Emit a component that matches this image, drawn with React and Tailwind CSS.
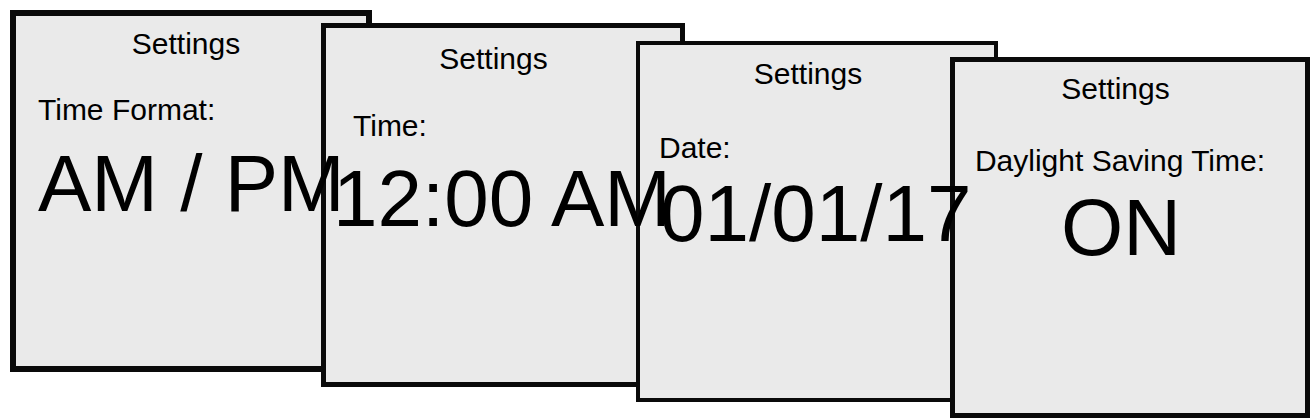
import React from "react";

const font = { fontFamily: '"Liberation Sans", Arial, sans-serif' };

export default function App() {
  return (
    <div
      className="w-[1312px] h-[420px] overflow-hidden bg-white pt-[10px] text-black"
      style={font}
    >
      {/* Panel 1 */}
      <div className="ml-[10px] w-[362px] h-[362px] border-[6px] border-[#0a0a0a] bg-[#eaeaea] pt-[13px]">
        <div className="text-[30px] leading-none text-center pr-[10px]">Settings</div>
        <div className="text-[30px] leading-none mt-[36px] pl-[22px]">Time Format:</div>
        <div className="text-[80px] leading-none mt-[19px] pl-[22px] whitespace-nowrap">AM / PM</div>
      </div>

      {/* Panel 2 */}
      <div className="ml-[321px] -mt-[349px] w-[364px] h-[364px] border-[5px] border-[#0a0a0a] bg-[#eaeaea] pt-[16px]">
        <div className="text-[30px] leading-none text-center pr-[19px]">Settings</div>
        <div className="text-[30px] leading-none mt-[37px] pl-[27px]">Time:</div>
        <div className="text-[80px] leading-none mt-[18px] pl-[7px] whitespace-nowrap">12:00 AM</div>
      </div>

      {/* Panel 3 */}
      <div className="ml-[636px] -mt-[346px] w-[362px] h-[361px] border-[4px] border-[#0a0a0a] bg-[#eaeaea] pt-[14px]">
        <div className="text-[30px] leading-none text-center pr-[18px]">Settings</div>
        <div className="text-[30px] leading-none mt-[44px] pl-[19px]">Date:</div>
        <div className="text-[80px] leading-none mt-[11px] pl-[20px] whitespace-nowrap">01/01/17</div>
      </div>

      {/* Panel 4 */}
      <div className="ml-[950px] -mt-[345px] w-[360px] h-[361px] border-[5px] border-[#0a0a0a] bg-[#eaeaea] pt-[12px]">
        <div className="text-[30px] leading-none text-center pr-[29px]">Settings</div>
        <div className="text-[30px] leading-none mt-[42px] text-center pr-[20px] whitespace-nowrap">
          Daylight Saving Time:
        </div>
        <div className="text-[80px] leading-none mt-[12px] text-center pr-[18px] whitespace-nowrap">ON</div>
      </div>
    </div>
  );
}
